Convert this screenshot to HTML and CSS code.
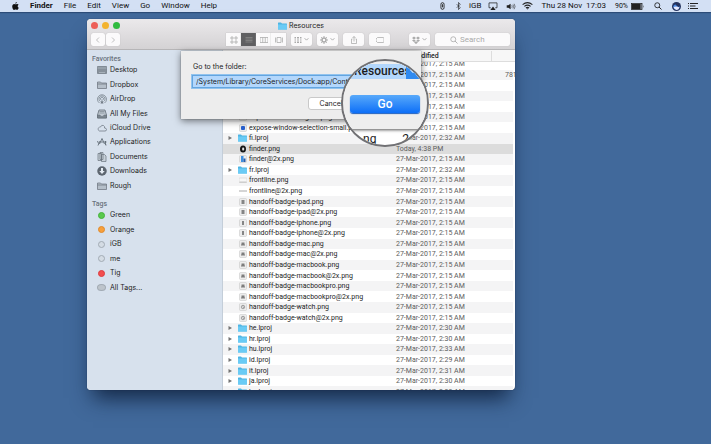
FILE: index.html
```html
<!DOCTYPE html>
<html lang="en">
<head>
<meta charset="utf-8">
<title>Finder</title>
<link rel="stylesheet" href="styles.css">
</head>
<body>
<svg class="defs" aria-hidden="true">
  <symbol id="folder" viewBox="0 0 18 16"><path d="M0 2Q0 1 1 1H6L8 3H17Q18 3 18 4V14Q18 15 17 15H1Q0 15 0 14Z" fill="#4fb4e2"/><path d="M0 5H18V14Q18 15 17 15H1Q0 15 0 14Z" fill="#6acbf5"/></symbol>
  <symbol id="tri" viewBox="0 0 8 8"><path d="M1 0L8 4L1 8Z" fill="#737373"/></symbol>
  <symbol id="badge" viewBox="0 0 16 16"><rect x="1" y="1" width="14" height="14" rx="2" fill="#ececec" stroke="#c3c3c3"/></symbol>
  <symbol id="sfolder" viewBox="0 0 20 16"><path d="M1 2H7L9 4H19V15H1ZM1 6H19" fill="#b5bfc9" stroke="#6d7680" stroke-width="1.5"/></symbol>
  <symbol id="lens" viewBox="0 0 16 16"><circle cx="6.5" cy="6.5" r="5" fill="none" stroke="currentColor" stroke-width="1.6"/><path d="M10 10L15 15" stroke="currentColor" stroke-width="1.8"/></symbol>
</svg>

<header class="menubar">
  <svg class="apple" viewBox="0 0 16 18"><path d="M11 0C11 2 9.500 4 7.500 4C7.500 2 9 .4 11 0ZM8 5C9 5 10 4 12 4.200C13.500 4.300 14.500 5 15 6C12 8 12.500 11.500 15.500 13C14.500 15.500 13 18 11.500 18C10 18 9.800 17.200 8.200 17.200C6.500 17.200 6 18 4.800 18C3 18 .5 14 .5 10C.5 6.500 2.500 4.300 5 4.300C6.300 4.300 7.200 5 8 5Z" fill="#111"/></svg>
  <nav class="menus"><b>Finder</b><span>File</span><span>Edit</span><span>View</span><span>Go</span><span>Window</span><span>Help</span></nav>
  <div class="status">
    <svg class="s-clip" viewBox="0 0 10 18"><rect x="1.500" y="1.500" width="7" height="15" rx="3.500" fill="none" stroke="#222" stroke-width="2"/><path d="M5 5V12" stroke="#222" stroke-width="2"/></svg>
    <svg class="s-bt" viewBox="0 0 10 18"><path d="M1 5L9 13L5 17V1L9 5L1 13" fill="none" stroke="#222" stroke-width="1.500"/></svg>
    <span class="s-user">iGB</span>
    <svg class="s-air" viewBox="0 0 22 18"><path d="M6 13H2V2H20V13H16" fill="none" stroke="#222" stroke-width="1.700"/><path d="M5 18L11 10L17 18Z" fill="#222"/></svg>
    <svg class="s-vol" viewBox="0 0 24 18"><path d="M1 6H5L11 2V16L5 12H1Z" fill="#222"/><path d="M14 6Q16 9 14 12M17 4Q20.500 9 17 14M20 2Q25 9 20 16" fill="none" stroke="#222" stroke-width="1.400"/></svg>
    <svg class="s-wifi" viewBox="0 0 24 18"><path d="M1 6Q12-3 23 6M5 10Q12 4 19 10M8.500 13.500Q12 10.500 15.500 13.500" fill="none" stroke="#222" stroke-width="2.400"/><path d="M10 15Q12 13.500 14 15L12 17Z" fill="#222"/></svg>
    <time class="s-time">Thu 28 Nov &nbsp;17:03</time>
    <span class="s-pct">90%</span>
    <svg class="s-bat" viewBox="0 0 26 14"><rect x="1" y="1" width="21" height="12" fill="#9098a4" stroke="#222" stroke-width="1.500"/><path d="M2 2H19V12H2Z" fill="#222"/><path d="M24 4V10Q26 7 24 4Z" fill="#222"/></svg>
    <svg class="s-lens"><use href="#lens"/></svg>
    <svg class="s-siri" viewBox="0 0 18 18"><circle cx="9" cy="9" r="9" fill="#26345f"/><path d="M2 9Q6 2 9 7T16 8Q15 14 9 15Q4 14 2 9Z" fill="#4887e0"/><path d="M3 10Q9 8 15 11Q13 16 9 16Q5 16 3 10Z" fill="#e6eaff"/></svg>
    <svg class="s-list" viewBox="0 0 20 16"><path d="M0 3H2M4 3H20M0 8H2M4 8H15M0 13H2M4 13H20" stroke="#222" stroke-width="2"/></svg>
  </div>
</header>

<main class="window">
  <div class="chrome">
    <div class="titlebar">
      <div class="lights"><i class="red"></i><i class="yellow"></i><i class="green"></i></div>
      <h1 class="title"><svg class="folder"><use href="#folder"/></svg>Resources</h1>
    </div>
    <div class="toolbar">
      <div class="group nav">
        <button aria-label="Back"><svg viewBox="0 0 16 16"><path d="M10 3L5 8L10 13"/></svg></button>
        <button aria-label="Forward"><svg viewBox="0 0 16 16"><path d="M6 3L11 8L6 13"/></svg></button>
      </div>
      <div class="group views">
        <button aria-label="Icons"><svg viewBox="0 0 16 16"><path d="M2 2H6V6H2ZM10 2H14V6H10ZM2 10H6V14H2ZM10 10H14V14H10Z"/></svg></button>
        <button class="on" aria-label="List"><svg viewBox="0 0 16 16"><path d="M1 3H15M1 6H15M1 9H15M1 12H15"/></svg></button>
        <button aria-label="Columns"><svg viewBox="0 0 16 16"><path d="M0 3H16V13H0ZM5.500 3V13M10.500 3V13"/></svg></button>
        <button aria-label="Cover Flow"><svg viewBox="0 0 16 16"><path d="M4 3H12V13H4ZM1 3V13M15 3V13"/></svg></button>
      </div>
      <button class="tool arrange" aria-label="Arrange"><svg viewBox="0 0 16 16"><path d="M1 3H4M6 3H10M12 3H15M1 6H4M6 6H10M12 6H15M1 10H4M6 10H10M12 10H15M1 13H4M6 13H10M12 13H15" stroke-width="2"/></svg><svg class="chev" viewBox="0 0 8 8"><path d="M1 2L4 5L7 2"/></svg></button>
      <button class="tool action" aria-label="Action"><svg viewBox="0 0 16 16"><circle cx="8" cy="8" r="4" stroke-width="3"/><path d="M8 0V3M8 13V16M0 8H3M13 8H16M2.500 2.500L5 5M11 11L13.500 13.500M13.500 2.500L11 5M5 11L2.500 13.500" stroke-width="2"/></svg><svg class="chev" viewBox="0 0 8 8"><path d="M1 2L4 5L7 2"/></svg></button>
      <button class="tool share" aria-label="Share"><svg viewBox="0 0 16 16"><path d="M5 6H3V15H13V6H11M8 11V1M5 4L8 1L11 4"/></svg></button>
      <button class="tool tags" aria-label="Tags"><svg viewBox="0 0 16 16"><path d="M3 3H14Q16 3 16 5V11Q16 13 14 13H3L0 10V6Z"/></svg></button>
      <button class="tool drop" aria-label="Dropbox"><svg viewBox="0 0 16 16"><path d="M4 1L8 4L4 7L0 4ZM12 1L16 4L12 7L8 4ZM4 7L8 10L12 7L16 9L12 12L8 10L4 12L0 9ZM4 13L8 11L12 13L8 16Z" class="solid"/></svg><svg class="chev" viewBox="0 0 8 8"><path d="M1 2L4 5L7 2"/></svg></button>
      <label class="search"><svg><use href="#lens"/></svg><input type="search" placeholder="Search" aria-label="Search"></label>
    </div>
  </div>

  <div class="panes">
    <aside class="sidebar">
      <h2>Favorites</h2>
      <ul>
        <li><svg viewBox="0 0 20 16"><path d="M1 1H19V15H1Z" fill="#87919b" stroke="#727c86" stroke-width="1.500"/><path d="M1 4H19M4 13H16" stroke="#c7d0d9"/></svg>Desktop</li>
        <li><svg><use href="#sfolder"/></svg>Dropbox</li>
        <li><svg viewBox="0 0 20 20"><path d="M5 18A9 9 0 1 1 15 18M7 15A6 6 0 1 1 13 15M8.500 12A3 3 0 1 1 11.500 12" fill="none" stroke="#737d87" stroke-width="1.500"/><path d="M7 19L10 11L13 19Z" fill="#737d87"/></svg>AirDrop</li>
        <li><svg viewBox="0 0 20 20"><path d="M4 2H16L19 12V18H1V12Z" fill="#c0c9d2" stroke="#626c76" stroke-width="1.600"/><path d="M1 12H6Q7 15 10 15T14 12H19V18H1ZM5 5H15M5 8H15" fill="#7b858f" stroke="#626c76"/></svg>All My Files</li>
        <li><svg viewBox="0 0 20 16"><path d="M5 14A4 4 0 0 1 4 7Q5 5 7 6Q9 1 13 3Q16 5 15 8Q19 8 19 11T16 14Z" fill="none" stroke="#6d7781" stroke-width="1.500"/></svg>iCloud Drive</li>
        <li><svg viewBox="0 0 20 20"><path d="M5 14L10 3L15 14M7 10H13M1 8L3 13M6 8L2 17M14 10H19M17 8V16Q18 17 19 16" fill="none" stroke="#5b656f" stroke-width="1.700"/></svg>Applications</li>
        <li><svg viewBox="0 0 20 20"><path d="M2 3H9V17H2ZM6 1H12V15H6ZM9 5H15L18 8V19H9Z" fill="#c8d1da" stroke="#68727c" stroke-width="1.400"/></svg>Documents</li>
        <li><svg viewBox="0 0 20 20"><circle cx="10" cy="10" r="9.500" fill="#5d6670"/><path d="M8 4H12V10H15.500L10 16L4.500 10H8Z" fill="#e4ebf2"/></svg>Downloads</li>
        <li><svg><use href="#sfolder"/></svg>Rough</li>
      </ul>
      <h2>Tags</h2>
      <ul class="taglist">
        <li><i class="green"></i>Green</li>
        <li><i class="orange"></i>Orange</li>
        <li><i></i>iGB</li>
        <li><i></i>me</li>
        <li><i class="red"></i>Tig</li>
        <li><i class="all"></i>All Tags...</li>
      </ul>
    </aside>

    <section class="files">
      <div class="columns"><span>Name</span><span class="date">Date Modified</span><span class="size"></span></div>
      <div class="scroller">
        <table>
          <tbody id="rows"></tbody>
        </table>
      </div>
    </section>
  </div>

  <form class="sheet">
    <label for="path">Go to the folder:</label>
    <input id="path" type="text" value="/System/Library/CoreServices/Dock.app/Contents/Resources">
    <div class="buttons"><button type="button">Cancel</button></div>
  </form>

  <div class="loupe">
    <div class="loupe-sheet">
      <div class="loupe-path"><span>Resources</span><b><svg viewBox="0 0 10 10"><path d="M1 3L5 7L9 3" fill="none" stroke="#fff" stroke-width="2"/></svg></b></div>
      <button type="button" class="go">Go</button>
    </div>
    <div class="loupe-list"><span>ng</span><span>2</span></div>
  </div>
</main>
<script src="files.js"></script>
</body>
</html>
```
FILE: styles.css
```css
* { box-sizing: border-box; }
body {
  margin: 0;
  min-height: 100vh;
  background: #41699b;
  font: 7px/10px Inter, "Liberation Sans", sans-serif;
  color: #1c1c1c;
  overflow: hidden;
}
button, input { font: inherit; color: inherit; margin: 0; padding: 0; }
ul { list-style: none; margin: 0; padding: 0; }
svg { display: block; flex: none; }
.defs { position: absolute; width: 0; height: 0; }

.menubar {
  display: flex;
  align-items: center;
  height: 12px;
  padding: 0 13px 0 12px;
  background: #d3e0f4;
  box-shadow: 0 1px 1px #2c4c78;
  font-family: Roboto, sans-serif;
  font-size: 8px;
  color: #111;
}
.apple { width: 7px; height: 8px; margin-right: 11px; }
.menus { display: flex; gap: 11px; flex: 1; }
.status { display: flex; align-items: center; }
.s-clip { width: 5px; height: 8px; margin-right: 11px; }
.s-bt { width: 5px; height: 8px; margin-right: 8px; }
.s-user { margin-right: 7px; }
.s-air { width: 10px; height: 8px; margin-right: 7px; }
.s-vol { width: 12px; height: 7px; margin-right: 5px; }
.s-wifi { width: 11px; height: 8px; margin-right: 8px; }
.s-time { margin-right: 9px; }
.s-pct { margin-right: 3px; font-size: 7px; }
.s-bat { width: 13px; height: 7px; margin-right: 10px; }
.s-lens { width: 8px; height: 8px; margin-right: 10px; }
.s-siri { width: 9px; height: 9px; margin-right: 7px; }
.s-list { width: 10px; height: 8px; }

.window {
  position: relative;
  margin: 7px 196px 0 87px;
  border-radius: 4px;
  background: #fff;
  box-shadow: 0 0 1px #14253f, 0 14px 20px -6px rgba(8, 22, 48, .8);
}
.chrome {
  height: 31px;
  border-radius: 4px 4px 0 0;
  background: linear-gradient(#ebe9eb, #d4d2d4);
  border-bottom: 1px solid #b6b5b7;
}
.titlebar {
  display: grid;
  grid-template-columns: 1fr auto 1fr;
  align-items: center;
  height: 13px;
}
.lights { display: flex; gap: 4px; padding-left: 4px; }
.lights i { width: 7px; height: 7px; border-radius: 50%; }
.lights .red { background: #ed5f57; }
.lights .yellow { background: #f3b32f; }
.lights .green { background: #30bb3f; }
.title { display: flex; align-items: center; gap: 2px; margin: 0; font-size: 7px; font-weight: 400; }
.folder { width: 9px; height: 8px; }
.toolbar { display: flex; align-items: center; height: 15px; padding: 0 5px 0 4px; }
.toolbar button, .search {
  display: flex;
  align-items: center;
  justify-content: center;
  height: 13px;
  border: 0;
  border-radius: 2px;
  background: #fbfafb;
  box-shadow: 0 0 1px #aaa;
}
.toolbar svg { width: 8px; height: 8px; fill: none; stroke: #aaa; stroke-width: 1.5; }
.toolbar .chev { width: 5px; height: 5px; margin-left: 2px; }
.toolbar .solid { fill: #aaa; stroke: none; }
.group { display: flex; gap: 1px; }
.nav button { width: 14px; }
.nav { flex: 1; }
.views button { width: 15px; border-radius: 0; }
.views { gap: 0; }
.toolbar .on { background: #606062; }
.views .on svg { stroke: #8a8a8a; }
.tool { width: 21px; margin-left: 5px; }
.toolbar .drop { margin-left: 19px; }
.toolbar .search { width: 75px; margin-left: 5px; gap: 2px; justify-content: flex-start; padding-left: 15px; color: #aaa; }
.search input { width: 40px; border: 0; background: none; outline: 0; font-family: Roboto, sans-serif; font-size: 8px; line-height: 10px; }
.search input::placeholder { color: #aaa; opacity: 1; }

.panes { display: grid; grid-template-columns: 136px 1fr; height: 340px; }
.sidebar { padding: 3px 5px; background: #d7e1ed; border-right: 1px solid #c4ced9; border-radius: 0 0 0 4px; }
.sidebar h2 { margin: 0; height: 10px; font-size: 7px; font-weight: 500; line-height: 12px; font-family: Roboto, sans-serif; color: #69727c; }
.sidebar ul { display: grid; grid-template-rows: repeat(9, 1fr); height: 130px; margin-bottom: 5px; }
.sidebar .taglist { grid-template-rows: repeat(6, 1fr); height: 87px; }
.sidebar li { display: flex; align-items: center; gap: 3px; padding-left: 5px; }
.sidebar li svg { width: 10px; height: 10px; }
.taglist i { width: 7px; height: 7px; margin: 0 2px 0 1px; border: 1px solid #a2abb4; border-radius: 50%; background: #d4dce4; }
.taglist .green { background: #5ac94d; border-color: #45b33b; }
.taglist .orange { background: #f7a03c; border-color: #e08a2c; }
.taglist .red { background: #f34e4e; border-color: #dc3c40; }
.taglist .all { width: 9px; margin: 0 1px 0 0; background: #bdc4cb; }

.files { min-width: 0; overflow: hidden; border-radius: 0 0 4px 0; font-family: Roboto, sans-serif; }
.columns {
  display: grid;
  grid-template-columns: 1fr 96px 24px;
  height: 12px;
  padding-left: 27px;
  align-items: center;
  background: #f7f7f7;
  border-bottom: 1px solid #ddd;
  font-weight: 500;
}
.columns .size { height: 10px; border-left: 1px solid #ddd; }
.scroller { height: 328px; overflow: hidden; }
table { display: block; margin-top: -3px; padding-right: 2px; }
tbody { display: grid; grid-template-rows: repeat(32, 1fr); height: 338px; }
tr { display: grid; grid-template-columns: 1fr 109px 8px; align-items: center; min-height: 0; }
tr:nth-child(even) { background: #f4f4f5; }
tr.selected { background: #dcdcdc; }
td { display: flex; align-items: center; padding: 0; height: 10px; white-space: nowrap; color: #5c5c5c; }
td:first-child { gap: 2px; color: #1c1c1c; }
.tri { width: 4px; height: 4px; margin: 0 5px 0 5px; }
.tri.none { visibility: hidden; }
td .folder { width: 9px; height: 8px; margin-left: -1px; }
td .thumb { width: 8px; height: 8px; }

.sheet {
  position: absolute;
  top: 32px;
  left: 94px;
  width: 240px;
  padding: 11px 12px 9px 11px;
  background: #ededed;
  box-shadow: 0 2px 7px rgba(0, 0, 0, .5), 0 0 1px #777;
}
.sheet label { display: block; padding-left: 1px; }
.sheet input {
  display: block;
  width: 100%;
  height: 13px;
  margin-top: 3px;
  padding: 0 3px;
  border: 1px solid #63a5df;
  outline: 1px solid #92c3ee;
  background: #b3d7fc;
}
.buttons { padding: 9px 0 0 116px; }
.buttons button { width: 46px; height: 13px; border: 1px solid #c9c9c9; border-radius: 3px; background: #fff; }

.loupe {
  position: absolute;
  top: 40px;
  left: 254px;
  width: 88px;
  height: 88px;
  border: 2px solid #717174;
  border-radius: 50%;
  overflow: hidden;
  background: #fff;
  font-family: Roboto, sans-serif;
}
.loupe-sheet { height: 68px; padding-top: 3px; background: #eee; box-shadow: 0 1px 3px #555; }
.loupe-path { display: flex; height: 15px; font-size: 12px; font-weight: 500; line-height: 14px; background: #b3d7fc; }
.loupe-path span { padding-left: 11px; width: 63px; overflow: hidden; }
.loupe-path b { flex: 1; background: #2f8af0; }
.loupe-path svg { width: 6px; height: 6px; margin: 4px 0 0 4px; }
.go {
  display: block;
  width: 70px;
  height: 18px;
  margin: 16px 0 0 7px;
  border: 0;
  border-radius: 3px;
  background: linear-gradient(#58a9fa, #0d6ff8);
  box-shadow: 0 1px 1px #1b5fc0;
  font-size: 12px;
  font-weight: 500;
  line-height: 18px;
}
.loupe .go { color: #fff; }
.loupe-list { display: flex; justify-content: space-between; padding: 5px 18px 0 20px; font-size: 12px; }
```
FILE: files.js
```js
const files = [
  ["expose-window.png", "2:15", "img"],
  ["expose-window@2x.png", "2:15", "img", "781"],
  ["expose-window-big.png", "2:15", "img"],
  ["expose-window-big@2x.png", "2:15", "img"],
  ["expose-window-selection-big.png", "2:15", "img"],
  ["expose-window-big-alt.png", "2:15", "img"],
  ["expose-window-selection-small.png", "2:15", "blue"],
  ["fi.lproj", "2:32", "folder"],
  ["finder.png", "", "dark"],
  ["finder@2x.png", "2:15", "face"],
  ["fr.lproj", "2:32", "folder"],
  ["frontline.png", "2:15", "line"],
  ["frontline@2x.png", "2:15", "dash"],
  ["handoff-badge-ipad.png", "2:15", "tall"],
  ["handoff-badge-ipad@2x.png", "2:15", "tall"],
  ["handoff-badge-iphone.png", "2:15", "thin"],
  ["handoff-badge-iphone@2x.png", "2:15", "thin"],
  ["handoff-badge-mac.png", "2:15", "mac"],
  ["handoff-badge-mac@2x.png", "2:15", "mac"],
  ["handoff-badge-macbook.png", "2:15", "mac"],
  ["handoff-badge-macbook@2x.png", "2:15", "mac"],
  ["handoff-badge-macbookpro.png", "2:15", "mac"],
  ["handoff-badge-macbookpro@2x.png", "2:15", "mac"],
  ["handoff-badge-watch.png", "2:15", "watch"],
  ["handoff-badge-watch@2x.png", "2:15", "watch"],
  ["he.lproj", "2:30", "folder"],
  ["hr.lproj", "2:30", "folder"],
  ["hu.lproj", "2:33", "folder"],
  ["id.lproj", "2:29", "folder"],
  ["it.lproj", "2:31", "folder"],
  ["ja.lproj", "2:30", "folder"],
  ["ko.lproj", "2:33", "folder"]
];
const badge = '<use href="#badge"/>';
const thumbs = {
  img: badge,
  blue: badge + '<rect x="4" y="4" width="8" height="8" rx="2" fill="#2860cf"/>',
  dark: '<ellipse cx="8" cy="8" rx="6" ry="7" fill="#151515"/><path d="M8 4L11 8L8 12L6 8Z" fill="#eee"/>',
  face: badge + '<path d="M4 2H9V14H4Z" fill="#3c8fe0"/><path d="M9 7H13V14H9Z" fill="#285ca9"/>',
  line: '<rect x="0" y="4" width="16" height="9" rx="1" fill="#f7f7f7" stroke="#c8c8c8"/><path d="M1 12H15" stroke="#999"/>',
  dash: '<path d="M0 8H16" stroke="#aaa" stroke-width="2"/>',
  tall: badge + '<rect x="5" y="4" width="6" height="8" fill="#858585"/>',
  thin: badge + '<rect x="6" y="4" width="4" height="8" fill="#858585"/>',
  mac: badge + '<path d="M5 5H11V9H12V11H4V9H5Z" fill="#7d7d7d"/>',
  watch: badge + '<circle cx="8" cy="8" r="3.5" fill="none" stroke="#8a8a8a" stroke-width="1.5"/><path d="M8 5V9H10" fill="none" stroke="#777"/>'
};
document.getElementById("rows").innerHTML = files.map(([name, time, kind, size]) => {
  const folder = kind === "folder";
  const icon = folder ? '<svg class="folder"><use href="#folder"/></svg>'
    : `<svg class="thumb" viewBox="0 0 16 16">${thumbs[kind]}</svg>`;
  const date = time ? `27-Mar-2017, ${time} AM` : "Today, 4:38 PM";
  return `<tr class="${time ? "" : "selected"}"><td><svg class="tri ${folder ? "" : "none"}"><use href="#tri"/></svg>${icon}${name}</td><td>${date}</td><td>${size || ""}</td></tr>`;
}).join("");
```
